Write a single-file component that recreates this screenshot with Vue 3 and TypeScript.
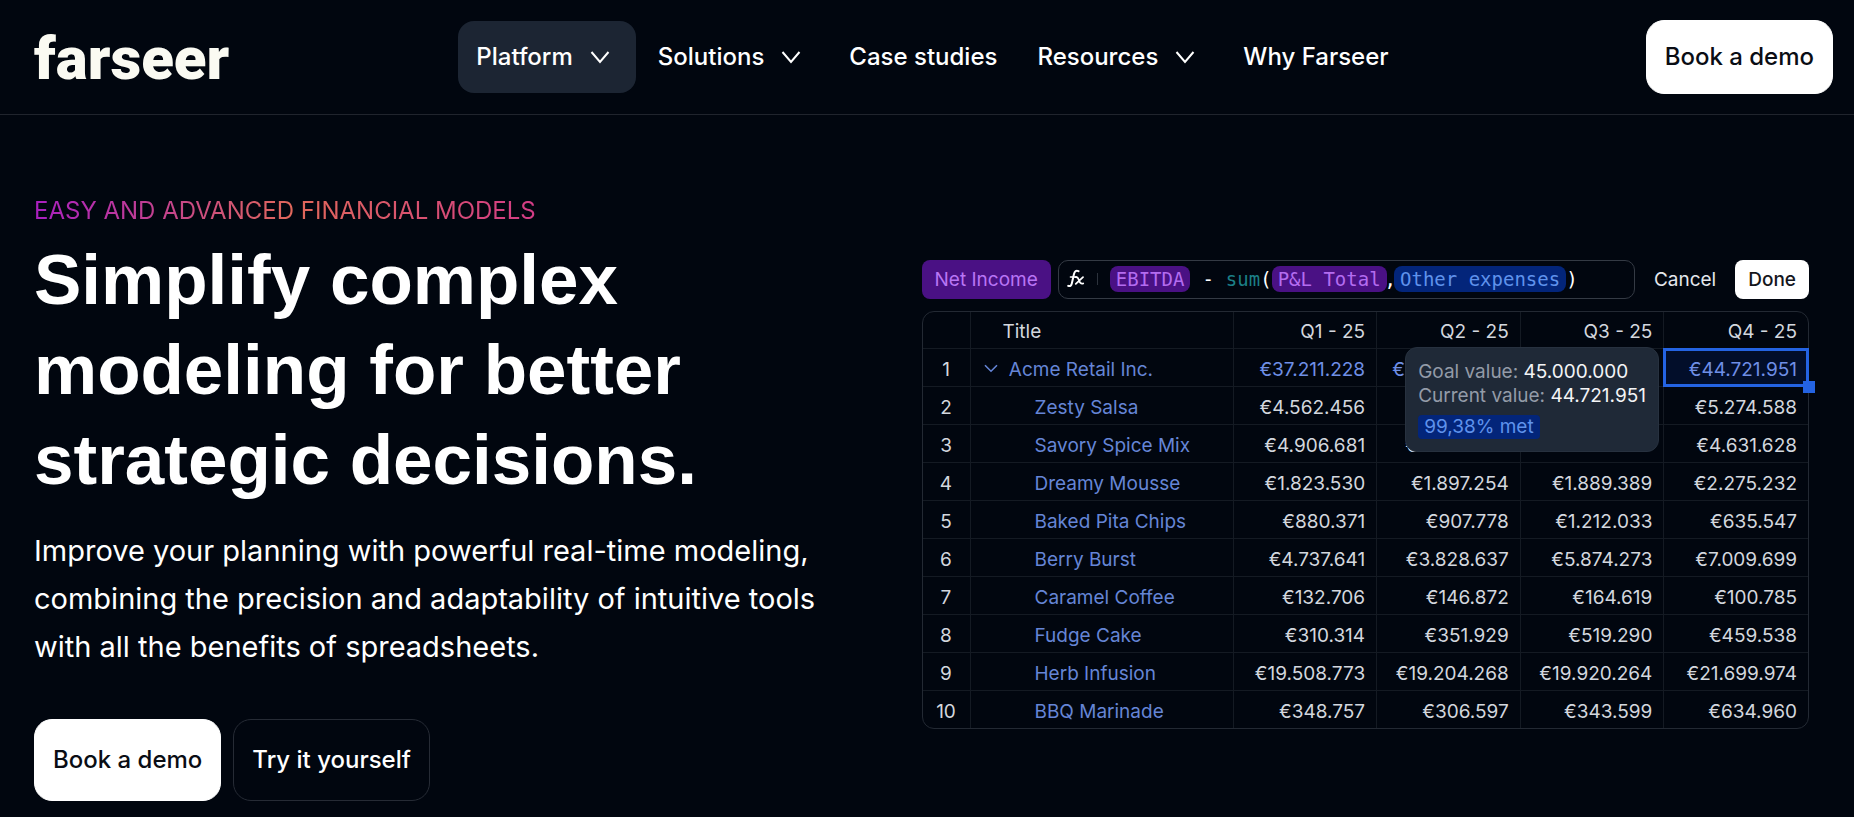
<script setup lang="ts">
interface NavItem {
  label: string
  menu: boolean
  active?: boolean
}

interface Row {
  title: string
  values: string[]
  parent?: boolean
}

const navItems: NavItem[] = [
  { label: 'Platform', menu: true, active: true },
  { label: 'Solutions', menu: true },
  { label: 'Case studies', menu: false },
  { label: 'Resources', menu: true },
  { label: 'Why Farseer', menu: false },
]

const quarters: string[] = ['Q1 - 25', 'Q2 - 25', 'Q3 - 25', 'Q4 - 25']

const rows: Row[] = [
  { title: 'Acme Retail Inc.', values: ['€37.211.228', '€36.202.850', '', '€44.721.951'], parent: true },
  { title: 'Zesty Salsa', values: ['€4.562.456', '', '', '€5.274.588'] },
  { title: 'Savory Spice Mix', values: ['€4.906.681', '€4.736.905', '', '€4.631.628'] },
  { title: 'Dreamy Mousse', values: ['€1.823.530', '€1.897.254', '€1.889.389', '€2.275.232'] },
  { title: 'Baked Pita Chips', values: ['€880.371', '€907.778', '€1.212.033', '€635.547'] },
  { title: 'Berry Burst', values: ['€4.737.641', '€3.828.637', '€5.874.273', '€7.009.699'] },
  { title: 'Caramel Coffee', values: ['€132.706', '€146.872', '€164.619', '€100.785'] },
  { title: 'Fudge Cake', values: ['€310.314', '€351.929', '€519.290', '€459.538'] },
  { title: 'Herb Infusion', values: ['€19.508.773', '€19.204.268', '€19.920.264', '€21.699.974'] },
  { title: 'BBQ Marinade', values: ['€348.757', '€306.597', '€343.599', '€634.960'] },
]

const isSelected = (row: number, col: number): boolean => row === 0 && col === 3
</script>

<template>
  <div class="page">
    <header class="header">
      <a class="logo" href="#">farseer</a>
      <nav class="nav" aria-label="Main">
        <template v-for="item in navItems" :key="item.label">
          <button v-if="item.menu" type="button" class="nav-item has-menu" :class="{ active: item.active }">
            {{ item.label }}
            <svg width="20" height="14" viewBox="0 0 20 14" fill="none" aria-hidden="true">
              <path d="M1.500 2 10 12 18.500 2" stroke="currentColor" stroke-width="2" />
            </svg>
          </button>
          <a v-else class="nav-item" href="#">{{ item.label }}</a>
        </template>
      </nav>
      <a class="button primary header-cta" href="#">Book a demo</a>
    </header>

    <main class="hero">
      <section class="intro">
        <p class="eyebrow">EASY AND ADVANCED FINANCIAL MODELS</p>
        <h1>Simplify complex<br />modeling for better<br />strategic decisions.</h1>
        <p class="lead">
          Improve your planning with powerful real-time modeling, combining the precision and
          adaptability of intuitive tools with all the benefits of spreadsheets.
        </p>
        <div class="actions">
          <a class="button primary" href="#">Book a demo</a>
          <a class="button outline" href="#">Try it yourself</a>
        </div>
      </section>

      <section class="model" aria-label="Financial model">
        <div class="toolbar">
          <span class="metric">Net Income</span>
          <div class="formula">
            <svg class="fx" width="18" height="20" viewBox="0 0 18 20" fill="none" stroke="currentColor" stroke-linecap="round" aria-hidden="true">
              <path d="M11.500 2.200C9.300 1 7.600 2.200 7 5L4.800 14.500C4.300 16.800 3 17.600 1.200 16.800" stroke-width="2" />
              <path d="M3.500 8H9.500" stroke-width="1.600" />
              <path d="M8.500 8.200C11 7.500 11.300 9.500 12 11.500S13.800 15.300 16.200 14.500M16 8.200 8.800 14.800" stroke-width="1.800" />
            </svg>
            <span class="caret"></span>
            <code class="expression"><span class="token purple">EBITDA</span><span class="minus">-</span><span class="fn">sum</span>(<span class="token purple">P&amp;L Total</span><span class="comma">,</span><span class="token blue">Other expenses</span>)</code>
          </div>
          <button type="button" class="cancel">Cancel</button>
          <button type="button" class="done">Done</button>
        </div>

        <div class="sheet">
          <table>
            <colgroup>
              <col class="col-index" />
              <col class="col-title" />
              <col v-for="q in quarters" :key="q" />
            </colgroup>
            <thead>
              <tr>
                <th></th>
                <th class="title-head">Title</th>
                <th v-for="q in quarters" :key="q" class="num">{{ q }}</th>
              </tr>
            </thead>
            <tbody>
              <tr v-for="(row, r) in rows" :key="row.title" :class="{ parent: row.parent }">
                <td class="index">{{ r + 1 }}</td>
                <td class="title">
                  <svg v-if="row.parent" width="14" height="9" viewBox="0 0 14 9" fill="none" aria-hidden="true">
                    <path d="M1 1.200 7 7.200 13 1.200" stroke="currentColor" stroke-width="1.600" />
                  </svg>
                  {{ row.title }}
                </td>
                <td v-for="(value, c) in row.values" :key="c" class="num" :class="{ selected: isSelected(r, c) }">
                  {{ value }}
                </td>
              </tr>
            </tbody>
          </table>
          <div class="tooltip" role="tooltip">
            <p>Goal value: <strong>45.000.000</strong></p>
            <p>Current value: <strong>44.721.951</strong></p>
            <span class="met">99,38% met</span>
          </div>
        </div>
      </section>
    </main>
  </div>
</template>

<style>
body {
  margin: 0;
  background: #01060f;
}
</style>

<style scoped>
.page {
  min-height: 100vh;
  box-sizing: border-box;
  background: #01060f;
  color: #fff;
  font-family: Inter, "Liberation Sans", sans-serif;
}

a {
  color: inherit;
  text-decoration: none;
}

button {
  font: inherit;
  color: inherit;
  background: none;
  border: 0;
}

.header {
  display: flex;
  align-items: center;
  justify-content: space-between;
  padding: 20px 21px 20px 34px;
  border-bottom: 1px solid #20242d;
}

.logo {
  padding-top: 4px;
  color: #fafaf2;
  font: 900 60px/70px Roboto, sans-serif;
}

.nav {
  display: flex;
  gap: 4px;
  margin-right: 10px;
}

.nav-item {
  display: flex;
  align-items: center;
  gap: 17px;
  padding: 0 18px;
  border-radius: 16px;
  font-size: 24px;
  font-weight: 500;
  line-height: 72px;
}

.has-menu {
  padding-right: 26px;
}

.nav-item.active {
  background: #1c2533;
}

.button {
  display: block;
  padding: 0 18px;
  border: 1px solid transparent;
  border-radius: 18px;
  font-size: 24px;
  font-weight: 500;
  line-height: 80px;
}

.header-cta {
  line-height: 72px;
}

.primary {
  background: #fff;
  border-color: #fff;
  color: #0a0d14;
}

.outline {
  border-color: #262b35;
}

.hero {
  display: grid;
  grid-template-columns: minmax(0, 1fr) minmax(0, 1fr);
  align-items: center;
  padding: 72px 45px 16px 34px;
}

.eyebrow {
  width: fit-content;
  margin: 0;
  font-size: 24px;
  line-height: 48px;
  background: linear-gradient(90deg, #a91fc0, #e0685a 52%, #d23c86);
  background-clip: text;
  color: transparent;
}

h1 {
  margin: 0;
  font: 700 71px/90px "Liberation Sans", sans-serif;
}

.lead {
  max-width: 800px;
  margin: 22px 0 48px;
  font-size: 29px;
  line-height: 48px;
}

.actions {
  display: flex;
  gap: 12px;
}

.model {
  font-size: 19px;
}

.toolbar {
  display: flex;
  margin-bottom: 12px;
  line-height: 39px;
}

.metric {
  padding: 0 13px;
  border-radius: 8px;
  background: #4a1184;
  color: #b975f5;
}

.formula {
  display: flex;
  flex: 1;
  align-items: center;
  margin-left: 7px;
  padding: 0 8px;
  border: 1px solid #343a44;
  border-radius: 10px;
}

.caret {
  width: 1px;
  height: 12px;
  margin: 0 12px;
  background: #2c323c;
}

.expression {
  display: flex;
  align-items: center;
  font: 19px/26px "DejaVu Sans Mono", monospace;
}

.token {
  padding: 0 6px;
  border-radius: 8px;
}

.purple {
  background: #4a1184;
  color: #b46cf0;
}

.blue {
  background: #03257a;
  color: #5f92ec;
}

.minus {
  padding: 0 12px;
}

.comma {
  margin: 0 -2px;
}

.fn {
  color: #1c7f86;
}

.cancel {
  padding: 0 19px;
  color: #e4e7ec;
}

.done {
  padding: 0 13px;
  border-radius: 8px;
  background: #fff;
  color: #14161c;
  font-weight: 500;
}

.sheet {
  position: relative;
  border: 1px solid #232933;
  border-radius: 12px;
}

table {
  width: 100%;
  table-layout: fixed;
  border-collapse: separate;
  border-spacing: 0;
}

.col-index {
  width: 48px;
}

.col-title {
  width: 263px;
}

th,
td {
  height: 32px;
  padding: 5px 11px 0;
  border-right: 1px solid #141a23;
  border-bottom: 1px solid #141a23;
  font-weight: 400;
  line-height: 32px;
  white-space: nowrap;
  color: #d3d7de;
}

th {
  padding-top: 4px;
}

th:last-child,
td:last-child {
  border-right: 0;
}

tbody tr:last-child td {
  border-bottom: 0;
}

.index {
  padding-left: 0;
  padding-right: 0;
  text-align: center;
}

.title-head {
  padding-left: 32px;
  text-align: left;
}

.title {
  padding-left: 64px;
  color: #6585d6;
}

.parent .title {
  padding-left: 13px;
}

.parent .title svg {
  margin-right: 6px;
  vertical-align: 3px;
}

.num {
  text-align: right;
}

.parent .num {
  color: #6f8fe6;
}

.selected {
  position: relative;
  background: #020e2a;
}

.selected::before {
  content: "";
  position: absolute;
  inset: -1px;
  border: 3px solid #2463e2;
}

.selected::after {
  content: "";
  position: absolute;
  right: -7px;
  bottom: -7px;
  width: 12px;
  height: 12px;
  background: #2463e2;
}

.tooltip {
  position: absolute;
  top: 35px;
  right: 149px;
  padding: 12px;
  border: 1px solid #27313f;
  border-radius: 12px;
  background: #1f2937;
  color: #939ba8;
  line-height: 24px;
}

.tooltip p {
  margin: 0;
}

.tooltip strong {
  color: #f3f4f6;
  font-weight: 400;
}

.met {
  display: inline-block;
  margin-top: 7px;
  padding: 0 6px;
  border-radius: 4px;
  background: #03257a;
  color: #5f92ec;
}
</style>
